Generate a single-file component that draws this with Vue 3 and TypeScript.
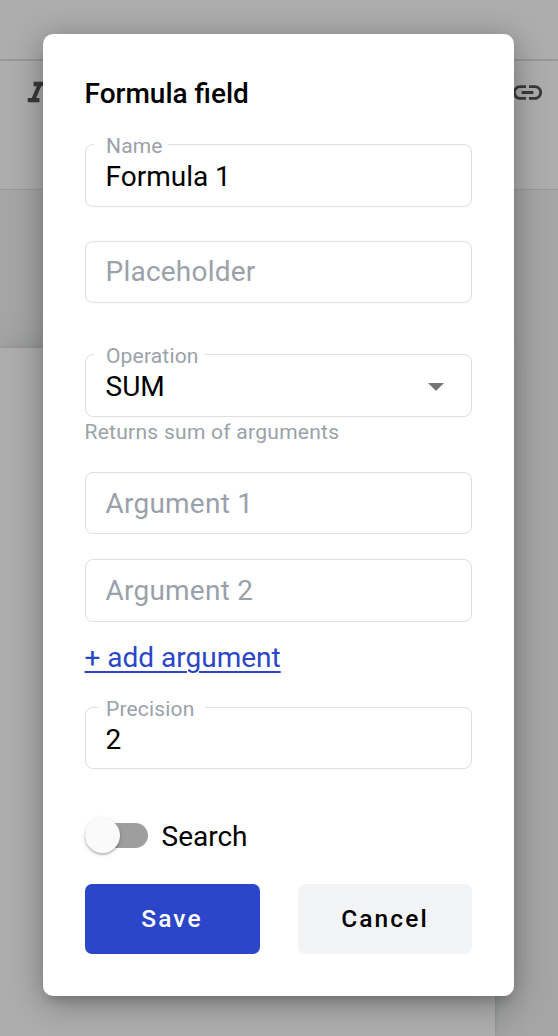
<script setup lang="ts">
import { ref } from 'vue'

const name = ref('Formula 1')
const operation = ref('SUM')
const precision = ref(2)
const search = ref(false)
</script>

<template>
  <div class="page">
    <div class="menubar"></div>
    <div class="toolbar">
      <svg class="tool" viewBox="0 0 24 24"><path d="M10 4v3h2.21l-3.42 8H6v3h8v-3h-2.21l3.42-8H18V4z" /></svg>
      <svg class="tool" viewBox="0 0 24 24"><path d="M3.9 12c0-1.71 1.39-3.1 3.1-3.1h4V7H7c-2.76 0-5 2.24-5 5s2.24 5 5 5h4v-1.9H7c-1.71 0-3.1-1.39-3.1-3.1zM8 13h8v-2H8v2zm9-6h-4v1.9h4c1.71 0 3.1 1.39 3.1 3.1s-1.39 3.1-3.1 3.1h-4V17h4c2.76 0 5-2.24 5-5s-2.24-5-5-5z" /></svg>
    </div>
    <div class="canvas"><div class="sheet"></div></div>

    <form class="dialog" role="dialog" @submit.prevent>
      <h2 class="title">Formula field</h2>

      <div class="field tall name">
        <label class="notch notch-name">Name</label>
        <span class="value">{{ name }}</span>
      </div>
      <div class="field placeholder"><span class="hint">Placeholder</span></div>
      <div class="field tall operation">
        <label class="notch notch-operation">Operation</label>
        <span class="value">{{ operation }}</span>
        <svg class="arrow" viewBox="0 0 16 8"><path d="M0 0h16L8 8z" /></svg>
      </div>
      <p class="helper">Returns sum of arguments</p>
      <div class="field arg1"><span class="hint">Argument 1</span></div>
      <div class="field tall arg2"><span class="hint">Argument 2</span></div>
      <a class="add">+ add argument</a>
      <div class="field precision">
        <label class="notch notch-precision">Precision</label>
        <span class="value">{{ precision }}</span>
      </div>

      <div class="toggle" role="switch" :aria-checked="search" @click="search = !search">
        <span class="track"><span class="thumb"></span></span>
        <span class="toggle-label">Search</span>
      </div>

      <div class="actions">
        <button class="btn save">Save</button>
        <button class="btn cancel">Cancel</button>
      </div>
    </form>
  </div>
</template>

<style>
body {
  margin: 0;
}
</style>

<style scoped>
* {
  box-sizing: border-box;
}
.page {
  position: relative;
  width: 558px;
  height: 1036px;
  overflow: hidden;
  display: flex;
  flex-direction: column;
  background: #adadad;
  font-family: Roboto, "Liberation Sans", sans-serif;
  color: #000;
}
.menubar {
  height: 61px;
  border-bottom: 2px solid #999;
}
.toolbar {
  height: 129px;
  padding: 13.5px 13px 0 19px;
  display: flex;
  justify-content: space-between;
  border-bottom: 1px solid #999;
}
.tool {
  width: 35px;
  height: 35px;
  fill: #39393b;
}
.tool:first-child {
  margin-top: 1px;
}
.canvas {
  flex: 1;
  padding-top: 158px;
  background: #a5a5a5;
}
.sheet {
  width: 495px;
  height: 100%;
  background: #adadad;
  box-shadow: 0 0 3px rgba(60, 60, 60, 0.2), 0 0 28px rgba(80, 96, 94, 0.26);
}
.dialog {
  position: absolute;
  left: 43px;
  top: 34px;
  width: 471px;
  height: 962px;
  padding: 38px 42px 42px;
  display: flex;
  flex-direction: column;
  border-radius: 10px;
  background: #fff;
  box-shadow: 0 9px 9px -5px rgba(0, 0, 0, 0.12), 0 6px 32px rgba(0, 0, 0, 0.35);
}
.title {
  margin: 1px 0 0 -0.5px;
  height: 42px;
  line-height: 42px;
  font-size: 28px;
  font-weight: 500;
}
.field {
  position: relative;
  flex: none;
  height: 62px;
  padding: 0 19.5px;
  display: flex;
  align-items: center;
  border: 1px solid #dedfe0;
  border-radius: 8px;
  font-size: 28px;
  line-height: 36px;
}
.tall {
  height: 63px;
}
.value {
  padding-top: 2px;
}
.precision .value {
  padding-top: 4px;
}
.hint {
  color: #9aa1aa;
  letter-spacing: 0.23px;
}
.arg1 .hint {
  padding-top: 2px;
}
.name {
  margin-top: 29px;
}
.placeholder {
  margin-top: 34px;
}
.operation {
  margin-top: 51px;
}
.arg1 {
  margin-top: 25px;
}
.arg2 {
  margin-top: 25px;
}
.precision {
  margin-top: 31px;
}
.notch {
  position: absolute;
  left: 8px;
  top: -13px;
  height: 28px;
  padding-left: 12px;
  background: #fff;
  color: #9aa1aa;
  font-size: 21px;
  line-height: 28px;
  letter-spacing: 0.17px;
  white-space: nowrap;
}
.notch-name {
  width: 74px;
}
.notch-operation {
  width: 111px;
}
.notch-precision {
  left: 12px;
  width: 107px;
  padding-left: 8px;
}
.arrow {
  width: 16px;
  height: 8px;
  margin: 3px 7.5px 0 auto;
  fill: #757575;
}
.helper {
  margin: 0 0 0 -0.5px;
  height: 30px;
  line-height: 30px;
  font-size: 21px;
  letter-spacing: 0.27px;
  color: #9aa1aa;
}
.add {
  align-self: flex-start;
  height: 36px;
  margin: 18px 0 0 -0.5px;
  line-height: 36px;
  font-size: 28px;
  color: #2b46c8;
  text-decoration: underline;
  text-decoration-thickness: 2px;
  text-underline-offset: 4px;
}
.toggle {
  height: 36px;
  margin-top: 48px;
  display: flex;
  align-items: center;
  gap: 13.5px;
}
.track {
  width: 63px;
  height: 25px;
  display: flex;
  align-items: center;
  border-radius: 13px;
  background: #9e9e9e;
}
.thumb {
  width: 35px;
  height: 35px;
  border-radius: 50%;
  background: #fafafa;
  box-shadow: 0 2px 2px rgba(0, 0, 0, 0.2), 0 1px 5px rgba(0, 0, 0, 0.12);
}
.toggle-label {
  padding-top: 4px;
  font-size: 28px;
  line-height: 36px;
}
.actions {
  margin-top: auto;
  display: flex;
  justify-content: space-between;
}
.btn {
  width: 174px;
  height: 70px;
  padding: 0 0 2px;
  border: 0;
  border-radius: 7px;
  font-family: inherit;
  font-size: 24.5px;
  font-weight: 500;
  letter-spacing: 2.1px;
}
.save {
  width: 175px;
  padding-right: 1px;
  color: #fff;
  background: #2b46c8;
}
.cancel {
  color: #000;
  background: #f3f4f6;
}
</style>
